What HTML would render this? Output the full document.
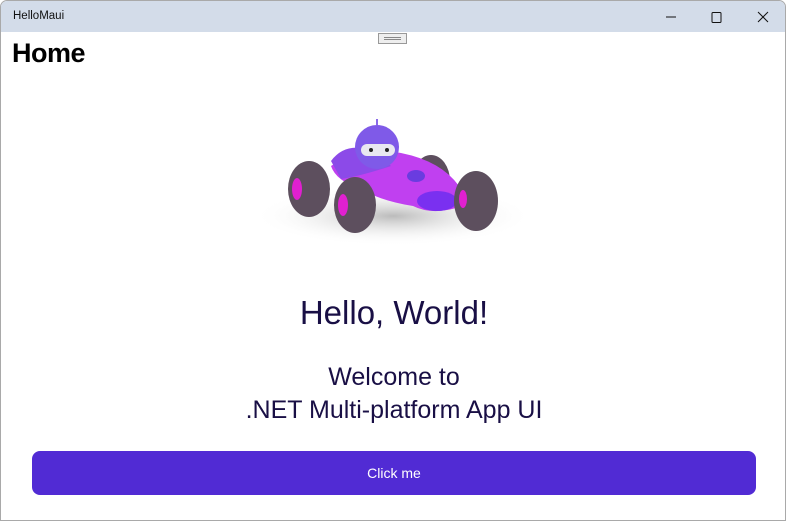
<!DOCTYPE html>
<html><head><style>
body{margin:0;width:786px;height:521px;overflow:hidden;background:#fff;font-family:"Liberation Sans",sans-serif;position:relative}
.win{position:absolute;left:0;top:0;width:784px;height:519px;border:1px solid #a9a9a9;border-radius:7px 7px 0 0;overflow:hidden}
.tb{height:31px;background:#d3dce9;position:relative}
.tt{position:absolute;left:12px;top:9px;font-size:11.5px;color:#111}
.home{position:absolute;left:11px;top:37px;font-size:27px;font-weight:bold;color:#000;letter-spacing:-0.5px}
.h1{position:absolute;left:0;width:786px;text-align:center;color:#190f45}
.btn{position:absolute;left:31px;top:450px;width:724px;height:44px;background:#512bd4;border-radius:8px;color:#fff;font-size:14px;text-align:center;line-height:44px}
</style></head><body><div class="win">
<div class="tb"><span class="tt">HelloMaui</span>
<svg style="position:absolute;left:660px;top:9px" width="120" height="14" fill="none" stroke="#111" stroke-width="1">
<line x1="5" y1="7" x2="15" y2="7"/><rect x="51" y="2.5" width="9" height="10" rx="1"/><line x1="97" y1="2" x2="107" y2="12"/><line x1="107" y1="2" x2="97" y2="12"/></svg></div>
<div style="position:absolute;left:377px;top:32px;width:29px;height:11px;border:1px solid #999;background:#eee;box-sizing:border-box"><div style="margin:3px 5px;border-top:1px solid #888;border-bottom:1px solid #888;height:1px"></div></div>
<div class="home">Home</div>
<svg style="position:absolute;left:0;top:0" width="786" height="260">
<defs><radialGradient id="sh"><stop offset="0" stop-color="#bbb"/><stop offset="1" stop-color="#fff" stop-opacity="0"/></radialGradient></defs>
<ellipse cx="392" cy="215" rx="140" ry="30" fill="url(#sh)"/>
<ellipse cx="430" cy="180" rx="19" ry="26" fill="#5d4f5e"/>
<ellipse cx="308" cy="188" rx="21" ry="28" fill="#5d4f5e"/>
<ellipse cx="296" cy="188" rx="5" ry="11" fill="#e020d0"/>
<path d="M330 165 Q360 145 400 152 Q440 160 458 185 Q465 200 455 207 Q430 214 412 205 Q380 200 360 188 Q335 180 330 165Z" fill="#c040f0"/>
<path d="M330 160 Q345 140 372 150 L390 165 Q360 175 340 178Z" fill="#8c4ae8"/>
<ellipse cx="436" cy="200" rx="20" ry="10" fill="#7a30f0"/>
<ellipse cx="415" cy="175" rx="9" ry="6" fill="#6a3ce0"/>
<circle cx="376" cy="146" r="22" fill="#7f5ae8"/>
<rect x="360" y="143" width="34" height="12" rx="6" fill="#e8e8f0"/>
<circle cx="370" cy="149" r="2" fill="#222"/><circle cx="386" cy="149" r="2" fill="#222"/>
<line x1="376" y1="124" x2="376" y2="118" stroke="#8a6ae8" stroke-width="2"/>
<ellipse cx="354" cy="204" rx="21" ry="28" fill="#5d4f5e"/>
<ellipse cx="342" cy="204" rx="5" ry="11" fill="#e020d0"/>
<ellipse cx="475" cy="200" rx="22" ry="30" fill="#5d4f5e"/>
<ellipse cx="462" cy="198" rx="4" ry="9" fill="#e020d0"/>
</svg>
<div class="h1" style="top:293px;font-size:33px">Hello, World!</div>
<div class="h1" style="top:360px;font-size:25px;line-height:33px">Welcome to<br>.NET Multi-platform App UI</div>
<div class="btn">Click me</div>
</div></body></html>
